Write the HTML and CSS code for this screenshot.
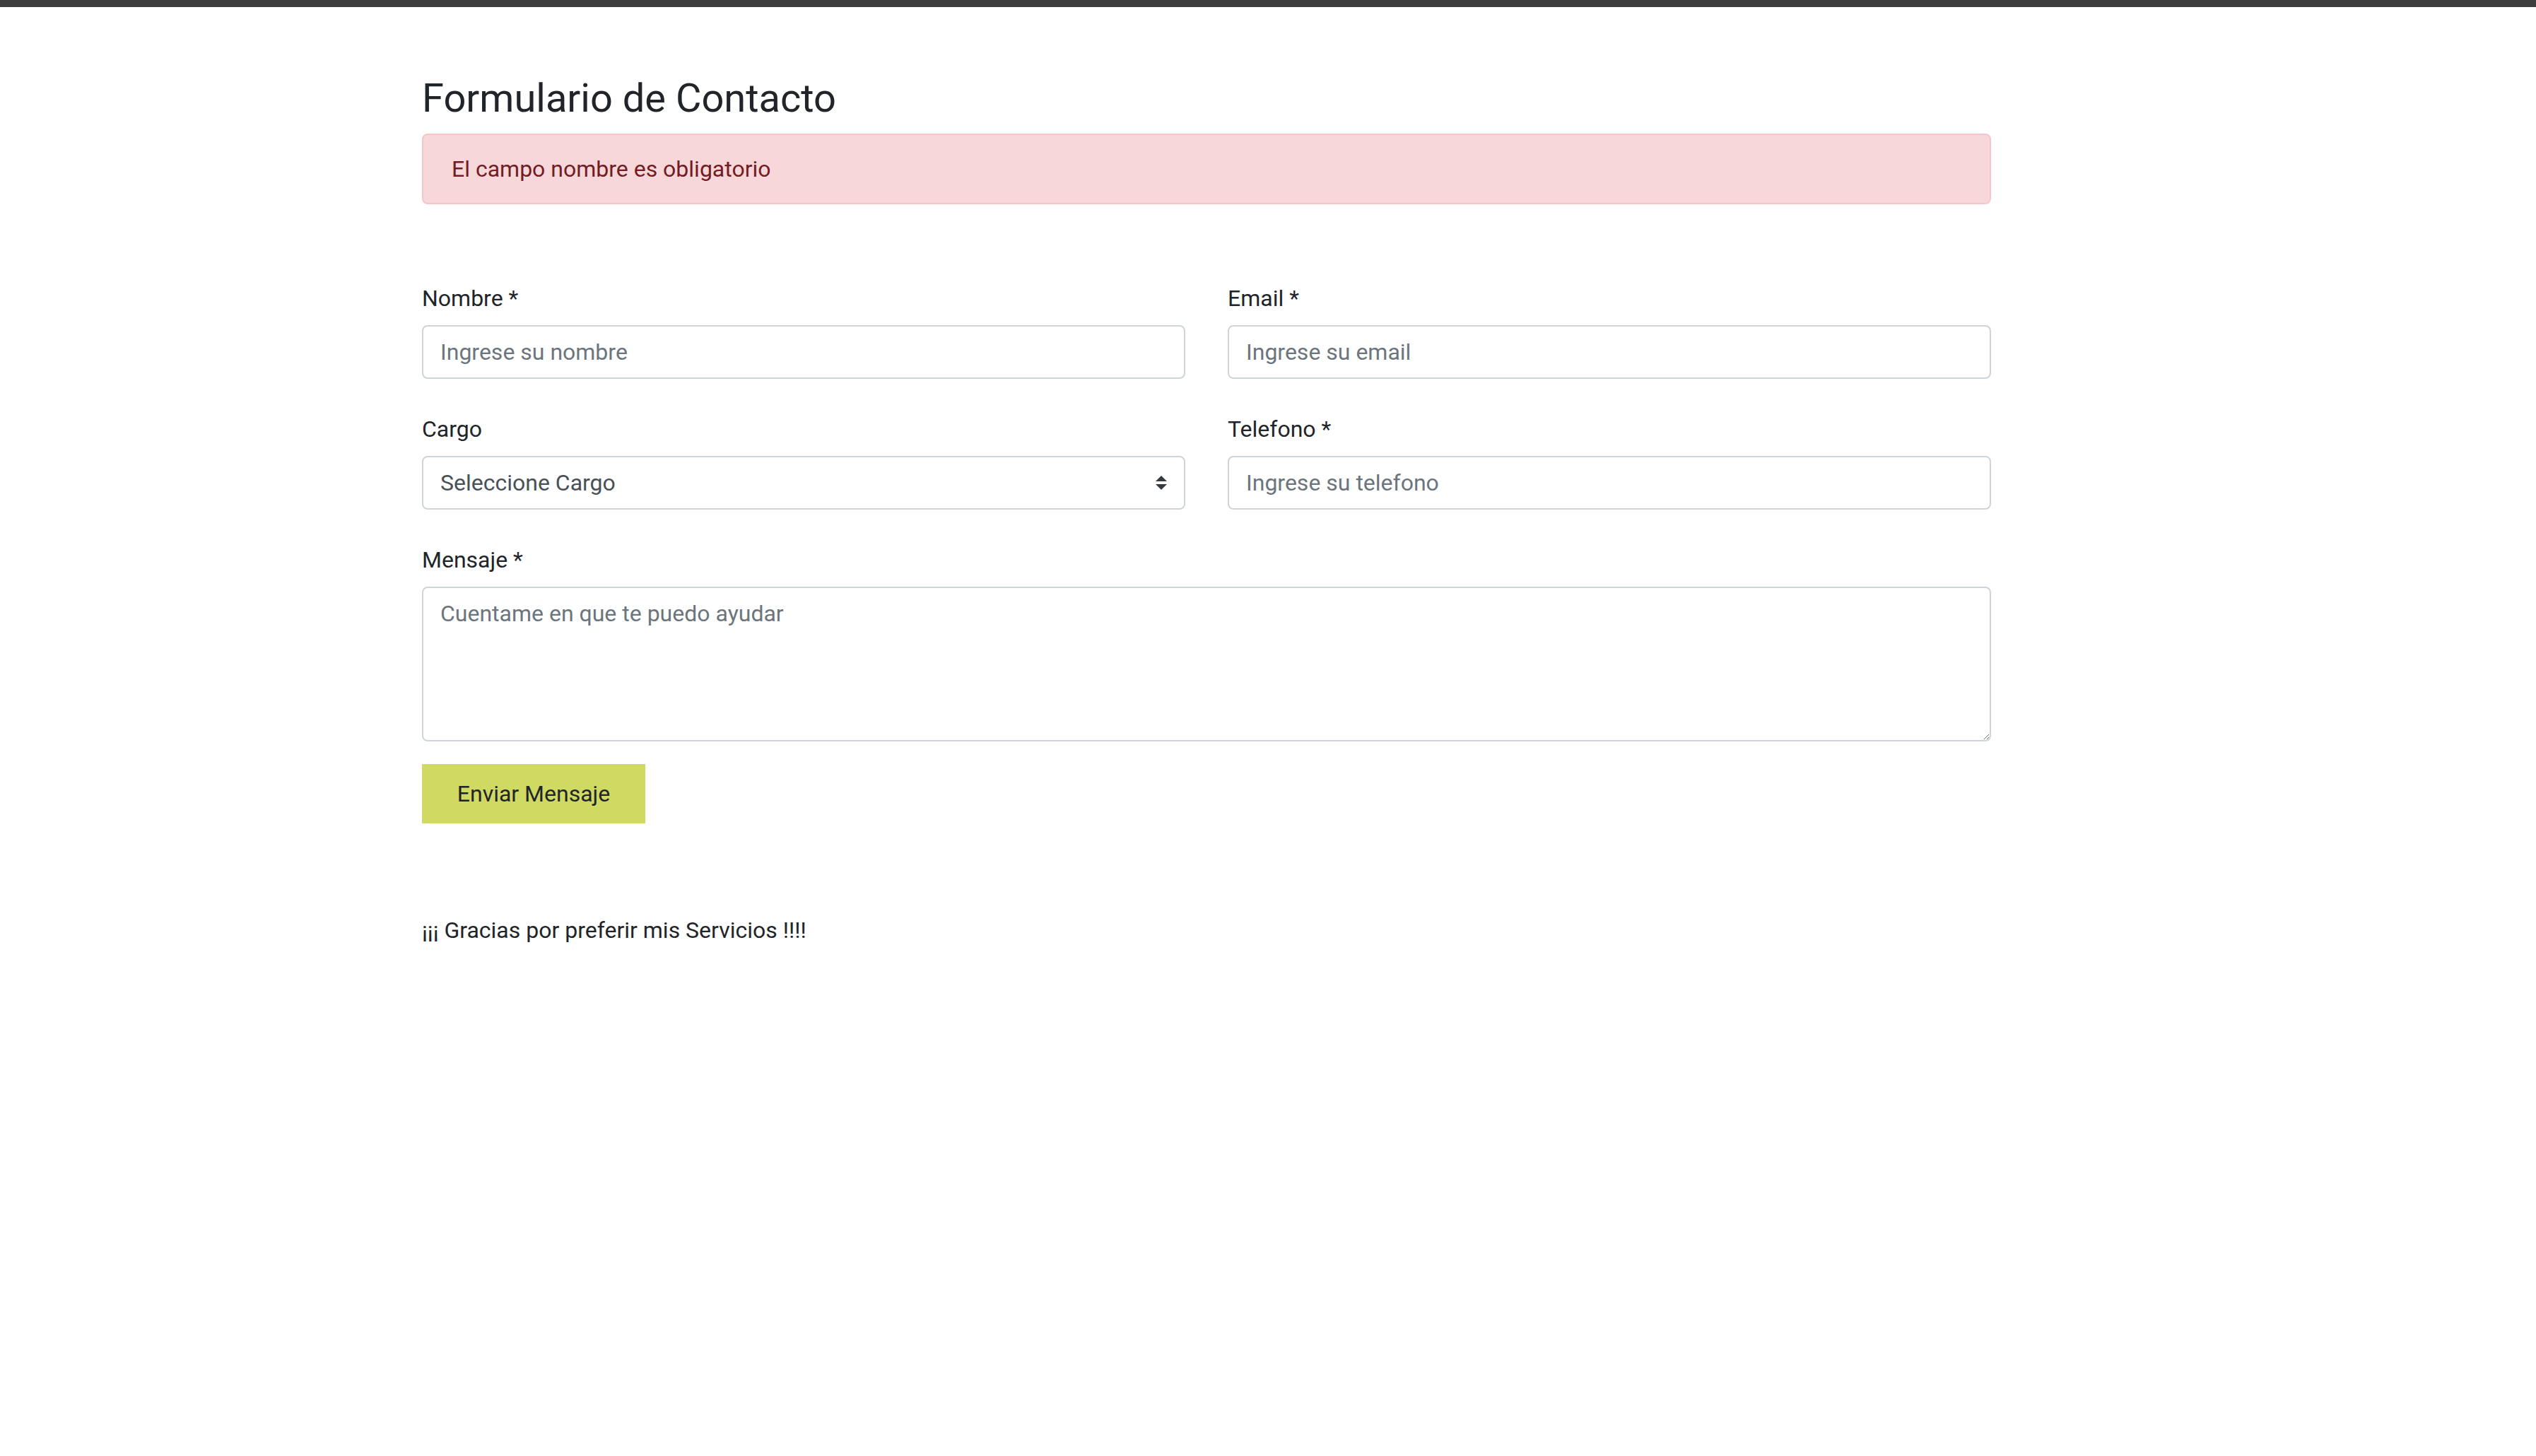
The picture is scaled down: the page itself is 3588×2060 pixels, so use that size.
FILE: index.html
```html
<!DOCTYPE html>
<html lang="es">
<head>
<meta charset="utf-8">
<title>Formulario de Contacto</title>
<link rel="stylesheet" href="styles.css">
</head>
<body>
<div class="topbar"></div>
<main class="page">
  <div class="container">
    <h1 class="title">Formulario de Contacto</h1>
    <div class="alert">El campo nombre es obligatorio</div>
    <form class="form">
      <div class="grid">
        <div class="group">
          <label class="label" for="nombre">Nombre *</label>
          <input class="control" id="nombre" type="text" placeholder="Ingrese su nombre">
        </div>
        <div class="group">
          <label class="label" for="email">Email *</label>
          <input class="control" id="email" type="text" placeholder="Ingrese su email">
        </div>
        <div class="group">
          <label class="label" for="cargo">Cargo</label>
          <select class="control select" id="cargo">
            <option>Seleccione Cargo</option>
          </select>
        </div>
        <div class="group">
          <label class="label" for="telefono">Telefono *</label>
          <input class="control" id="telefono" type="text" placeholder="Ingrese su telefono">
        </div>
      </div>
      <div class="group group-last">
        <label class="label" for="mensaje">Mensaje *</label>
        <textarea class="control textarea" id="mensaje" rows="4" placeholder="Cuentame en que te puedo ayudar"></textarea>
      </div>
      <button class="btn" type="button">Enviar Mensaje</button>
    </form>
    <p class="thanks">¡¡¡ Gracias por preferir mis Servicios !!!!</p>
  </div>
</main>
</body>
</html>
```

FILE: styles.css
```css
* {
  box-sizing: border-box;
}

html, body {
  margin: 0;
  padding: 0;
  background: #ffffff;
}

body {
  font-family: Roboto, "Noto Sans", "Liberation Sans", sans-serif;
  font-size: 32px;
  line-height: 48px;
  color: #212529;
}

.topbar {
  height: 10px;
  background: #3c3c3c;
}

.page {
  padding: 96px 0 0 597px;
}

.container {
  width: 2220px;
}

.title {
  margin: 0 0 16px;
  font-size: 56px;
  font-weight: 400;
  line-height: 67.2px;
  color: #212529;
}

.alert {
  height: 100px;
  padding: 24px 40px;
  border: 2px solid #f5c6cb;
  border-radius: 8px;
  background: #f8d7da;
  color: #721c24;
}

.form {
  padding-top: 107px;
}

.grid {
  display: grid;
  grid-template-columns: 1fr 1fr;
  column-gap: 60px;
}

.group {
  display: flex;
  flex-direction: column;
  margin-bottom: 45px;
}

.group-last {
  margin-bottom: 32px;
}

.label {
  padding-top: 2px;
  margin-bottom: 14px;
  line-height: 48px;
}

.control {
  display: block;
  width: 100%;
  height: 76px;
  padding: 12px 24px;
  border: 2px solid #ced4da;
  border-radius: 8px;
  background: #ffffff;
  font-family: inherit;
  font-size: 32px;
  line-height: 48px;
  color: #495057;
  outline: none;
}

.control::placeholder {
  color: #6c757d;
  opacity: 1;
}

.select {
  appearance: none;
  -webkit-appearance: none;
  padding-right: 64px;
  background-image: url("data:image/svg+xml,%3csvg xmlns='http://www.w3.org/2000/svg' width='4' height='5' viewBox='0 0 4 5'%3e%3cpath fill='%23343a40' d='M2 0L0 2h4zm0 5L0 3h4z'/%3e%3c/svg%3e");
  background-repeat: no-repeat;
  background-position: right 24px center;
  background-size: 16px 20px;
  color: #495057;
}

.textarea {
  height: 219px;
  resize: vertical;
}

.btn {
  display: block;
  width: 316px;
  height: 84px;
  padding: 0;
  border: 0;
  border-radius: 0;
  background: #d0d962;
  font-family: inherit;
  font-size: 32px;
  line-height: 48px;
  color: #212529;
  cursor: pointer;
}

.thanks {
  margin: 127px 0 0;
  font-size: 32px;
  line-height: 48px;
  color: #212529;
}
```
